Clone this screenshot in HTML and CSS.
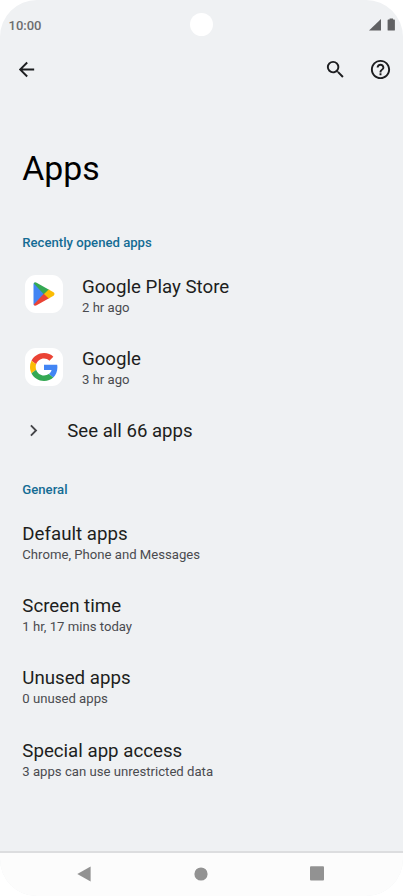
FILE: index.html
```html
<!DOCTYPE html>
<html lang="en">
<head>
<meta charset="utf-8">
<title>Apps</title>
<link rel="stylesheet" href="styles.css">
</head>
<body>
<div class="phone">
  <header class="status">
    <span class="clock">10:00</span>
    <span class="camera"></span>
    <svg class="indicators" width="28" height="14" viewBox="0 0 28 14"><path d="M0 12.6 12 .9v11.700z"/><path d="M18.600 2.200q0-.7.7-.7H20.600V.6h3.400v.9h1.200q.7 0 .7.7v9.700q0 .7-.7.7h-5.900q-.7 0-.7-.7z"/></svg>
  </header>
  <nav class="toolbar">
    <svg class="icon back" viewBox="0 0 24 24"><path d="M20 11H7.830l5.590-5.590L12 4l-8 8 8 8 1.410-1.410L7.830 13H20z"/></svg>
    <svg class="icon search" viewBox="0 0 24 24"><path d="M15.500 14h-.79l-.28-.27A6.471 6.471 0 0 0 16 9.500 6.500 6.500 0 1 0 9.500 16c1.610 0 3.090-.59 4.230-1.570l.27.28v.79l5 4.990L20.490 19zm-6 0C7.010 14 5 11.990 5 9.500S7.010 5 9.500 5 14 7.010 14 9.500 11.990 14 9.500 14z"/></svg>
    <svg class="icon help" viewBox="0 0 24 24"><path d="M11 18h2v-2h-2zm1-16C6.480 2 2 6.480 2 12s4.480 10 10 10 10-4.480 10-10S17.520 2 12 2zm0 18c-4.410 0-8-3.590-8-8s3.590-8 8-8 8 3.590 8 8-3.590 8-8 8zm0-14c-2.210 0-4 1.790-4 4h2c0-1.100.9-2 2-2s2 .9 2 2c0 2-3 1.750-3 5h2c0-2.250 3-2.500 3-5 0-2.210-1.790-4-4-4z"/></svg>
  </nav>
  <main class="content">
    <h1>Apps</h1>
    <h2>Recently opened apps</h2>
    <section class="recent">
      <div class="row">
        <span class="app-icon"><svg width="22" height="24" viewBox="0 0 22 24">
          <path fill="#4285f4" d="M.5 2v20q0 1 1 1.500L12 12 1.500.5Q.5 1 .5 2z"/>
          <path fill="#34a853" d="M1 1Q2-.2 3.600.7L16.500 8 11 12.500.8 1.500z"/>
          <path fill="#ea4335" d="M1 23q1 1.200 2.600.3L16.500 16 11 11.500.8 22.500z"/>
          <path fill="#fbbc04" d="M15.700 7.500 20.500 10.300q2 1.700 0 3.400L15.700 16.500 11 12z"/>
        </svg></span>
        <div><div class="title">Google Play Store</div><div class="sub">2 hr ago</div></div>
      </div>
      <div class="row">
        <span class="app-icon"><svg width="28" height="28" viewBox="0 0 48 48">
          <path fill="#ea4335" d="M24 9.500c3.540 0 6.710 1.220 9.210 3.600l6.850-6.850C35.900 2.380 30.470 0 24 0 14.620 0 6.510 5.380 2.560 13.220l7.980 6.190C12.430 13.720 17.740 9.500 24 9.500z"/>
          <path fill="#4285f4" d="M46.980 24.550c0-1.570-.15-3.090-.38-4.550H24v9.020h12.940c-.58 2.960-2.260 5.480-4.780 7.180l7.730 6c4.510-4.180 7.090-10.360 7.090-17.650z"/>
          <path fill="#fbbc05" d="M10.530 28.590A14.500 14.500 0 0 1 9.770 24c0-1.600.27-3.140.76-4.590l-7.980-6.190A23.900 23.900 0 0 0 0 24c0 3.880.92 7.540 2.560 10.780z"/>
          <path fill="#34a853" d="M24 48c6.480 0 11.930-2.130 15.890-5.810l-7.730-6c-2.150 1.450-4.920 2.300-8.160 2.300-6.260 0-11.570-4.220-13.470-9.910l-7.980 6.190C6.510 42.620 14.620 48 24 48z"/>
        </svg></span>
        <div><div class="title">Google</div><div class="sub">3 hr ago</div></div>
      </div>
      <div class="see-all">
        <svg class="icon chevron" viewBox="0 0 24 24"><path d="M10 6 8.590 7.410 13.170 12l-4.580 4.590L10 18l6-6z"/></svg>
        <span class="title">See all 66 apps</span>
      </div>
    </section>
    <h2>General</h2>
    <section class="general">
      <div class="row"><div><div class="title">Default apps</div><div class="sub">Chrome, Phone and Messages</div></div></div>
      <div class="row"><div><div class="title">Screen time</div><div class="sub">1 hr, 17 mins today</div></div></div>
      <div class="row"><div><div class="title">Unused apps</div><div class="sub">0 unused apps</div></div></div>
      <div class="row"><div><div class="title">Special app access</div><div class="sub">3 apps can use unrestricted data</div></div></div>
    </section>
  </main>
  <footer class="navbar">
    <svg width="14" height="16" viewBox="0 0 14 16"><path d="M.3 8 13.600.6v14.800z"/></svg>
    <svg width="14" height="14" viewBox="0 0 14 14"><circle cx="7" cy="7" r="6.600"/></svg>
    <svg width="14" height="15" viewBox="0 0 14 15"><rect y=".3" width="14" height="14.200" rx="1"/></svg>
  </footer>
</div>
</body>
</html>
```
FILE: styles.css
```css
* { box-sizing: border-box; }
body { margin: 0; background: #fff; font-family: Roboto, sans-serif; color: #1d1e20; }
svg { display: block; flex: none; }
.phone { width: 403px; height: 896px; border-radius: 37px; overflow: hidden; background: #eff1f3; display: flex; flex-direction: column; }
.status { height: 48px; flex: none; display: grid; grid-template-columns: 1fr 23px 1fr; align-items: center; padding: 1px 6px 0 6px; }
.clock { font-size: 13px; font-weight: 500; color: #6c6d6f; line-height: 16px; padding: 2px 0 0 2.500px; }
.camera { width: 23px; height: 23px; border-radius: 50%; background: #fff; }
.indicators { justify-self: end; fill: #606163; }
.toolbar { height: 42px; flex: none; display: flex; align-items: center; padding: 0 11px 0 14.500px; }
.icon { width: 23px; height: 23px; fill: #1d1e20; }
.search { margin-left: auto; margin-right: 22px; }
.content { flex: 1; padding: 58px 22px 0 22.300px; }
h1 { margin: 0; font-size: 33.800px; line-height: 42px; font-weight: 400; color: #000; }
h2 { margin: 0; font-size: 13.150px; line-height: 18px; font-weight: 500; color: #146c94; }
h1 + h2 { margin-top: 44px; }
.recent { height: 229px; padding-top: 8px; }
.general { padding-top: 8px; }
.row { height: 72.400px; display: flex; align-items: center; }
.app-icon { width: 38px; height: 38px; margin: -4px 18.500px 0 3.200px; border-radius: 11px; background: #fff; display: flex; align-items: center; justify-content: center; }
.title { font-size: 18.700px; line-height: 22px; }
.sub { font-size: 13.150px; line-height: 19px; color: #4a4b4f; }
.see-all { display: flex; align-items: center; height: 52px; }
.see-all .title { font-size: 18.600px; }
.chevron { margin: -1px 22px 0 0; fill: #444548; }
.navbar { height: 45px; flex: none; border-top: 2px solid #dcdddf; background: #fcfcfc; display: flex; justify-content: space-between; align-items: center; padding: 0 79px 2px 77px; fill: #929292; }
```
